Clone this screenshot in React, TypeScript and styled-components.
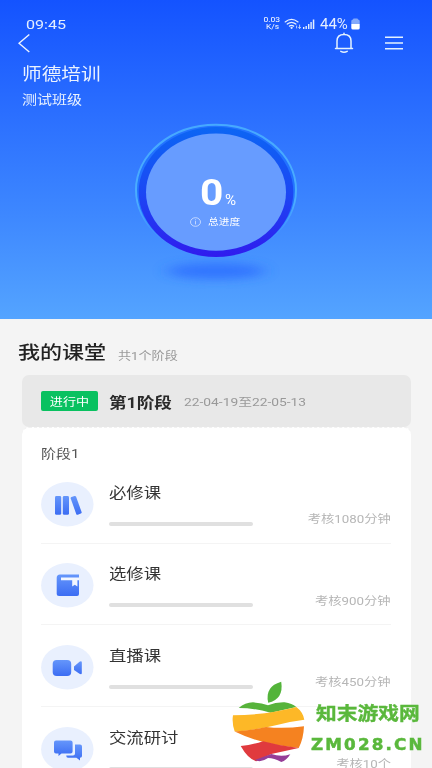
import React from "react";
import styled, { createGlobalStyle } from "styled-components";

const GlobalStyle = createGlobalStyle`
  * { box-sizing: border-box; }
  body { margin: 0; background: #f4f4f4; font-family: Roboto, "Noto Sans CJK SC", sans-serif; }
`;

const Screen = styled.div`
  position: relative;
  width: 432px;
  height: 768px;
  overflow: hidden;
  background: #f4f4f4;
`;

/* Text drawn with wide letterforms; the stretch keeps its anchored edge in place. */
const Text = styled.span<{ $size: number; $color?: string; $weight?: number; $wide?: number; $from?: string }>`
  display: inline-block;
  flex: none;
  white-space: nowrap;
  font-size: ${(p) => p.$size}px;
  font-weight: ${(p) => p.$weight ?? 400};
  color: ${(p) => p.$color ?? "#fff"};
  transform: scaleX(${(p) => p.$wide ?? 1.19});
  transform-origin: ${(p) => p.$from ?? "left"} center;
`;

const Hero = styled.header`
  height: 319px;
  display: flex;
  flex-direction: column;
  background: linear-gradient(#1453ff 0%, #2b6fff 36%, #3e88ff 68%, #54a4ff 100%);
`;

const StatusBar = styled.div`
  height: 32px;
  padding: 15px 72px 0 26px;
  display: flex;
  justify-content: space-between;
  line-height: 18px;
`;

const StatusIcons = styled.div`
  display: flex;
  align-items: center;
  height: 17px;
`;

const Speed = styled.div`
  width: 20px;
  margin-right: 2px;
  display: flex;
  flex-direction: column;
  align-items: center;
  line-height: 7px;
`;

const Percent = styled.div`
  width: 31px;
  margin-left: 5px;
`;

const NavBar = styled.nav`
  height: 22px;
  padding: 0 28px 0 18px;
  display: flex;
  align-items: center;
`;

const NavActions = styled.div`
  margin-left: auto;
  display: flex;
  align-items: center;
  gap: 30px;
`;

const Headings = styled.div`
  padding: 10px 0 0 22px;
  display: flex;
  flex-direction: column;
  align-items: flex-start;
  gap: 4px;
  line-height: 21px;
`;

const Dial = styled.div`
  position: relative;
  width: 192px;
  height: 180px;
  margin: 1px 0 0 120px;
`;

const DialValue = styled.div`
  position: absolute;
  left: 80px;
  top: 62px;
  display: flex;
  align-items: baseline;
  gap: 4px;
  line-height: 40px;
`;

const DialCaption = styled.div`
  position: absolute;
  left: 70px;
  top: 103px;
  display: flex;
  align-items: center;
  gap: 7px;
  line-height: 16px;
`;

const Classroom = styled.main`
  padding: 22px 21px 0 22px;
`;

const SectionTitle = styled.div`
  height: 34px;
  margin-left: -4px;
  display: flex;
  align-items: flex-start;
  line-height: 24px;
`;

const TitleSlot = styled.div<{ $width: number; $top?: number }>`
  width: ${(p) => p.$width}px;
  flex: none;
  padding-top: ${(p) => p.$top ?? 0}px;
`;

const StageBar = styled.div`
  height: 52px;
  padding-left: 19px;
  display: flex;
  align-items: center;
  border-radius: 7px;
  background: #e8e8e8;
`;

const Badge = styled.div`
  width: 57px;
  height: 20px;
  margin-right: 11px;
  display: flex;
  justify-content: center;
  align-items: center;
  border-radius: 2px;
  background: #09c160;
`;

const StageCard = styled.section`
  height: 360px;
  padding: 15px 20px 0 19px;
  border-top: 1px dashed #f1f1f1;
  border-radius: 7px 7px 0 0;
  background: #fff;
`;

const StageName = styled.div`
  height: 19px;
  line-height: 19px;
`;

const CourseRow = styled.article`
  height: 81.7px;
  display: flex;
  align-items: flex-start;
  padding-top: 19.5px;
  border-bottom: 1px solid #f4f4f4;
`;

const CourseIcon = styled.svg`
  width: 53px;
  height: 45px;
  flex: none;
  margin-right: 14.5px;
`;

const CourseBody = styled.div`
  width: 144px;
  display: flex;
  flex-direction: column;
  align-items: flex-start;
  line-height: 22px;
`;

const Track = styled.div`
  width: 144px;
  height: 4px;
  margin-top: 18px;
  border-radius: 2px;
  background: #e0e0e0;
`;

const Requirement = styled.div`
  margin: 27.5px 0 0 auto;
  line-height: 18px;
`;

const Watermark = styled.aside`
  position: absolute;
  left: 232px;
  top: 680px;
  display: flex;
`;

const WatermarkText = styled.div`
  margin: 20px 0 0 11px;
  display: flex;
  flex-direction: column;
  align-items: flex-start;
  line-height: 28px;
`;

const Domain = styled(Text)`
  font-family: "DejaVu Sans", sans-serif;
  letter-spacing: 2px;
  margin: 3px 0 0 -5px;
  -webkit-text-stroke: 0.5px #5ab83c;
`;

const SiteName = styled(Text)`
  -webkit-text-stroke: 0.4px #5ab83c;
`;

type Kind = "books" | "book" | "video" | "chat";

const glyphs: Record<Kind, React.ReactNode> = {
  books: (
    <g fill="url(#blue)">
      <rect x="14" y="14" width="6.2" height="18.8" rx="1.4" />
      <rect x="21.8" y="14" width="6.2" height="18.8" rx="1.4" />
      <path d="M30.4 15 L33.6 14 Q34.7 13.8 35.1 14.8 L40.6 30 Q41 31.2 39.9 31.6 L36.8 32.7 Q35.6 33 35.2 31.9 L29.7 16.4 Q29.4 15.4 30.4 15Z" />
    </g>
  ),
  book: (
    <g>
      <path d="M19 11.4H38V31Q38 33 36 33H18Q15.7 33 15.7 31V15Q15.7 11.4 19 11.4Z" fill="url(#blue)" />
      <path d="M20 14.6H38V17.2H36.4V23.4L33.8 21.7L31.200 23.400V17.200H20Z" fill="#f3f7ff" />
    </g>
  ),
  video: (
    <g fill="url(#blue)">
      <rect x="11.7" y="15" width="18.5" height="16" rx="4" />
      <path d="M33 21.500L38.500 16.700Q40.800 15.500 40.800 17.500V28Q40.800 30 38.500 28.800L33 25Z" />
    </g>
  ),
  chat: (
    <g fill="url(#blue)">
      <path d="M34 17.500H39Q41 17.500 41 19.500V29Q41 30.500 39 30.700V33.500L35.400 30.800H27Q25.300 30.800 25.200 28.500H32Q34 28.500 34 26.500Z" />
      <path d="M15 13.500H29.500Q31.600 13.500 31.600 15.500V24.500Q31.600 26.500 29.500 26.500H20.500L17.500 29.100V26.500H15Q13 26.500 13 24.500V15.500Q13 13.500 15 13.500Z" />
    </g>
  ),
};

const courses: { kind: Kind; name: string; need: string }[] = [
  { kind: "books", name: "必修课", need: "考核1080分钟" },
  { kind: "book", name: "选修课", need: "考核900分钟" },
  { kind: "video", name: "直播课", need: "考核450分钟" },
  { kind: "chat", name: "交流研讨", need: "考核10个" },
];

function Course({ kind, name, need }: { kind: Kind; name: string; need: string }) {
  return (
    <CourseRow>
      <CourseIcon viewBox="0 0 53 45">
        <defs>
          <linearGradient id="blue" x1="0" y1="0" x2="0" y2="1">
            <stop offset="0" stopColor="#6596fb" />
            <stop offset="1" stopColor="#3c6df3" />
          </linearGradient>
        </defs>
        <ellipse cx="26.3" cy="22.3" rx="26.2" ry="22.2" fill="#e9f0fe" />
        {glyphs[kind]}
      </CourseIcon>
      <CourseBody>
        <Text $size={14.6} $color="#333">{name}</Text>
        <Track />
      </CourseBody>
      <Requirement>
        <Text $size={11.2} $color="#b6b6b6" $from="right">{need}</Text>
      </Requirement>
    </CourseRow>
  );
}

function ProgressDial() {
  return (
    <Dial>
      <svg width="192" height="180" viewBox="0 1 192 180">
        <defs>
          <linearGradient id="ring" x1="0" y1="0" x2="0" y2="1">
            <stop offset="0" stopColor="#0c66f4" />
            <stop offset="0.5" stopColor="#1b48f4" />
            <stop offset="1" stopColor="#301bee" />
          </linearGradient>
          <linearGradient id="rim" x1="0" y1="0" x2="0" y2="1">
            <stop offset="0" stopColor="#46a9ff" />
            <stop offset="0.6" stopColor="#4badff" />
            <stop offset="0.92" stopColor="#4badff" stopOpacity="0" />
          </linearGradient>
          <filter id="soft" x="-30%" y="-150%" width="160%" height="400%">
            <feGaussianBlur stdDeviation="8 5" />
          </filter>
        </defs>
        <ellipse cx="96" cy="161" rx="49" ry="8" fill="#2f70ff" opacity="0.85" filter="url(#soft)" />
        <ellipse cx="96" cy="80" rx="80" ry="65.5" fill="#2373ff" />
        <ellipse cx="96" cy="80" rx="80" ry="65.2" fill="none" stroke="url(#rim)" strokeWidth="2" />
        <ellipse cx="96" cy="82" rx="77.3" ry="65" fill="url(#ring)" />
        <ellipse cx="96" cy="82.200" rx="70" ry="58.600" fill="#679cff" />
      </svg>
      <DialValue>
        <Text $size={37} $weight={700} $wide={1.1}>0</Text>
        <Text $size={14} $wide={1.08}>%</Text>
      </DialValue>
      <DialCaption>
        <svg width="11" height="10" viewBox="0 0 11 10" fill="none" stroke="#d9e6ff" strokeWidth="0.8">
          <ellipse cx="5.5" cy="5" rx="5" ry="4.3" />
          <path d="M5.5 2.4V3.3M5.5 4.1V7.4" />
        </svg>
        <Text $size={9}>总进度</Text>
      </DialCaption>
    </Dial>
  );
}

export default function App() {
  return (
    <Screen>
      <GlobalStyle />
      <Hero>
        <StatusBar>
          <Text $size={13.5} $color="#e4eeff">09:45</Text>
          <StatusIcons>
            <Speed>
              <Text $size={7} $from="center" $wide={1.22}>0.03</Text>
              <Text $size={7} $from="center" $wide={1.2}>K/s</Text>
            </Speed>
            <svg width="18" height="12" viewBox="0 0 18 12" fill="none" stroke="#e4eeff" strokeWidth="1.3" strokeLinecap="round">
              <path d="M1.2 3.9Q7.5-1.2 14 3.9M3.3 6Q7.5 2.6 11.8 6M5.5 8.1Q7.5 6.6 9.6 8.1" />
              <circle cx="7.6" cy="9.8" r="0.5" />
              <path d="M12.6 8v2M15.6 7v3.3M14.6 9.3l1 1.1 1-1.1" strokeWidth="0.8" />
            </svg>
            <svg width="13" height="12" viewBox="0 0 13 12" fill="#e4eeff">
              <path d="M1 9h1.4v2H1zM3.5 8h1.4v3H3.5zM6 6h1.4v5H6zM8.4 4h1.4v7H8.4zM10.8 1.500h1.5V11h-1.5z" />
            </svg>
            <Percent>
              <Text $size={14} $color="#e4eeff" $wide={1.07}>44%</Text>
            </Percent>
            <svg width="9" height="12" viewBox="0 0 9 12">
              <path d="M2 1.5Q2 .5 3 .5H6Q7 .5 7 1.5Q8.7 1.5 8.7 3V6H.3V3Q.3 1.5 2 1.5Z" fill="#83a9fb" />
              <path d="M.3 6H8.7V10Q8.7 11.5 7 11.5H2Q.3 11.5 .3 10Z" fill="#fff" />
            </svg>
          </StatusIcons>
        </StatusBar>
        <NavBar>
          <svg width="12" height="20" viewBox="0 0 12 20" fill="none" stroke="#eef4ff" strokeWidth="1.4">
            <path d="M11.3 1.5L1 10.3L11.3 19" />
          </svg>
          <NavActions>
            <svg width="20" height="22" viewBox="0 0 20 22" fill="none" stroke="#e4f2ff" strokeWidth="1.5" strokeLinecap="round">
              <path d="M3 16.5V9Q3 2.5 10 2.5Q17 2.5 17 9V16.5M1.5 16.5H18.5M10 1.2V2.2" />
              <path d="M6.8 19.3Q10 21 13.2 19.3" />
            </svg>
            <svg width="20" height="16" viewBox="0 0 20 16" stroke="#e4f2ff" strokeWidth="1.6">
              <path d="M1 2.2H19M1 8H19M1 13.8H19" />
            </svg>
          </NavActions>
        </NavBar>
        <Headings>
          <Text $size={16.5} $color="#eaf2ff">师德培训</Text>
          <Text $size={12.6} $color="#eaf2ff">测试班级</Text>
        </Headings>
        <ProgressDial />
      </Hero>
      <Classroom>
        <SectionTitle>
          <TitleSlot $width={100}>
            <Text $size={18.5} $weight={500} $color="#222">我的课堂</Text>
          </TitleSlot>
          <TitleSlot $width={70} $top={2}>
            <Text $size={11} $color="#999">共1个阶段</Text>
          </TitleSlot>
        </SectionTitle>
        <StageBar>
          <Badge>
            <Text $size={11} $from="center">进行中</Text>
          </Badge>
          <TitleSlot $width={75}>
            <Text $size={14.8} $weight={700} $color="#2a2a2a">第1阶段</Text>
          </TitleSlot>
          <Text $size={11.6} $color="#999">22-04-19至22-05-13</Text>
        </StageBar>
        <StageCard>
          <StageName>
            <Text $size={12.6} $color="#555">阶段1</Text>
          </StageName>
          {courses.map((c) => (
            <Course key={c.kind} {...c} />
          ))}
        </StageCard>
      </Classroom>
      <Watermark>
        <svg width="73" height="84" viewBox="0 0 73 84">
          <path d="M36.200 22.800Q32.500 6.500 49.200 1.700Q52 19 36.200 22.800Z" fill="#53b43a" />
          <path d="M6.700 28Q13 22.500 21 22.300Q30 23 36 25.300Q44 22 52.700 22.300Q60 23.500 64.300 27L38.700 32.700Q22 28 6.700 28Z" fill="#57b33b" />
          <path d="M1 35.300Q34 35 64.300 27Q71 32 72.300 39.700Q58 41.500 46 44.700Q25 50 2.700 51.500Q-.3 43 1 35.300Z" fill="#fdb827" />
          <path d="M2.700 51.500Q19 50.500 34 47Q52 49 72 46.300Q71.500 59 66.700 68Q30 65 2.700 51.500Z" fill="#f58220" />
          <path d="M8.700 66Q20 65 31 61.300Q48 66 66.700 68L39.300 74L24.300 81.300Q16 79 8.700 66Z" fill="#e03a3e" />
          <path d="M22.700 80L39.300 74Q49 77.500 58.300 74.300Q54.500 80.500 49.300 82Q42 78 36 78Q29 83 22.700 80Z" fill="#963d97" />
        </svg>
        <WatermarkText>
          <SiteName $size={18.5} $weight={700} $color="#5ab83c" $wide={1.12}>知末游戏网</SiteName>
          <Domain $size={15.5} $weight={700} $color="#5ab83c" $wide={1.08}>ZM028.CN</Domain>
        </WatermarkText>
      </Watermark>
    </Screen>
  );
}
